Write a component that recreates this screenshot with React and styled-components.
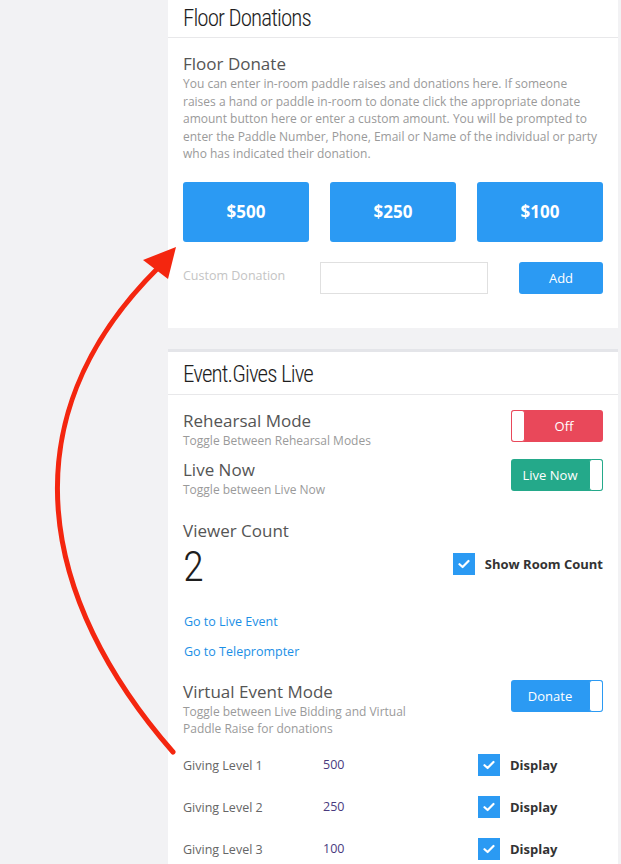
import React from "react";
import styled, { createGlobalStyle } from "styled-components";

const Global = createGlobalStyle`
  html, body { margin: 0; padding: 0; background: #f2f2f4; }
  body { font-family: "Open Sans", "Liberation Sans", sans-serif; }
  * { box-sizing: border-box; }
`;

const BLUE = "#2b9af3";
const CONDENSED = `"Roboto Condensed", "Roboto", "Liberation Sans", sans-serif`;

const Page = styled.div`
  position: relative;
  display: flex;
  min-height: 864px;
  background: #f2f2f4;
`;

const Side = styled.div`
  width: 168px;
  flex: none;
`;

const Main = styled.div`
  width: 450px;
  display: flex;
  flex-direction: column;
  gap: 21px;
`;

const Card = styled.section`
  background: #fff;
  border-top: ${(p) => (p.$topBorder ? "3px solid #e4e5e9" : "none")};
`;

const CardHeader = styled.div`
  height: ${(p) => p.$h || 38}px;
  padding: ${(p) => p.$pt || 0}px 15px 0;
  display: flex;
  align-items: center;
  border-bottom: 1px solid #e8e8ea;
  font-family: ${CONDENSED};
  font-stretch: 75%;
  font-weight: 300;
  font-size: 23px;
  color: #1e1e1e;
  letter-spacing: -0.9px;
`;

const CardBody = styled.div`
  padding: ${(p) => p.$pad || "15px 15px 34px"};
`;

const Title = styled.div`
  font-size: 17px;
  line-height: 22px;
  color: #555;
`;

const Desc = styled.div`
  font-size: 12px;
  line-height: 17.5px;
  color: #9a9a9a;
  max-width: ${(p) => p.$max || "416px"};
`;

const AmountRow = styled.div`
  display: grid;
  grid-template-columns: repeat(3, 126px);
  justify-content: space-between;
  margin-top: 19px;
`;

const AmountButton = styled.button`
  height: 60px;
  border: none;
  border-radius: 3px;
  background: ${BLUE};
  color: #fff;
  font-family: "Open Sans", sans-serif;
  font-weight: 700;
  font-size: 17px;
`;

const CustomRow = styled.div`
  display: flex;
  align-items: center;
  margin-top: 20px;
`;

const CustomLabel = styled.div`
  width: 137px;
  font-size: 12.5px;
  color: #c4c4c4;
  margin-top: -4px;
`;

const Input = styled.div`
  width: 168px;
  height: 32px;
  border: 1px solid #e0e0e0;
`;

const SmallButton = styled.button`
  margin-left: auto;
  width: 84px;
  height: 32px;
  border: none;
  border-radius: 3px;
  background: ${BLUE};
  color: #fff;
  font-family: "Open Sans", sans-serif;
  font-size: 13px;
`;

const SettingRow = styled.div`
  display: flex;
  justify-content: space-between;
  align-items: flex-start;
  margin-top: ${(p) => p.$mt || 0}px;
`;

const Toggle = styled.div`
  width: 92px;
  height: 32px;
  border-radius: 3px;
  background: ${(p) => p.$bg};
  display: flex;
  flex-direction: ${(p) => (p.$knobLeft ? "row" : "row-reverse")};
  align-items: stretch;
  margin-top: ${(p) => p.$mt || 0}px;
  overflow: hidden;
`;

const Knob = styled.div`
  width: 14px;
  background: #fff;
  border: 1px solid ${(p) => p.$bg};
  border-radius: 3px;
`;

const ToggleText = styled.div`
  flex: 1;
  display: flex;
  align-items: center;
  justify-content: center;
  color: #fff;
  font-size: 13px;
`;

const BigNumber = styled.div`
  font-family: ${CONDENSED};
  font-stretch: 75%;
  font-weight: 300;
  font-size: 43px;
  line-height: 48px;
  color: #1e1e1e;
`;

const CheckLine = styled.label`
  display: flex;
  align-items: center;
  gap: 10px;
  font-size: 13px;
  font-weight: 700;
  color: #333;
`;

const Box = styled.span`
  width: 22px;
  height: 22px;
  background: ${BLUE};
  display: flex;
  align-items: center;
  justify-content: center;
`;

const CountCheck = styled.div`
  padding-top: 33px;
`;

const Links = styled.div`
  display: flex;
  flex-direction: column;
  gap: 12px;
  margin-top: 23px;
`;

const LinkText = styled.a`
  font-size: 12.5px;
  line-height: 18px;
  color: #1b8fe6;
  text-decoration: none;
  padding-left: 1px;
`;

const Levels = styled.div`
  margin-top: 6px;
`;

const LevelRow = styled.div`
  display: flex;
  align-items: center;
  height: 42px;
`;

const LevelLabel = styled.div`
  width: 140px;
  font-size: 12.5px;
  color: #666;
  padding-top: 2px;
`;

const LevelValue = styled.div`
  width: 155px;
  font-size: 12.5px;
  color: #4a3a7e;
`;

const Peek = styled.div`
  margin: 1px 0 0 314px;
  width: 106px;
  height: 30px;
  background: #1f95cf;
  border-radius: 16px;
`;

const Overlay = styled.svg`
  position: absolute;
  left: 0;
  top: 0;
  pointer-events: none;
`;

const Check = () => (
  <svg width="12" height="10" viewBox="0 0 12 10">
    <path d="M1.5 5.2 L4.6 8 L10.5 2" fill="none" stroke="#fff" strokeWidth="2.2" strokeLinecap="round" strokeLinejoin="round" />
  </svg>
);

const Checkbox = ({ label }) => (
  <CheckLine>
    <Box>
      <Check />
    </Box>
    {label}
  </CheckLine>
);

const Switch = ({ bg, knobLeft, text, mt }) => (
  <Toggle $bg={bg} $knobLeft={knobLeft} $mt={mt}>
    <Knob $bg={bg} />
    <ToggleText>{text}</ToggleText>
  </Toggle>
);

const levels = [
  ["Giving Level 1", "500"],
  ["Giving Level 2", "250"],
  ["Giving Level 3", "100"],
];

export default function App() {
  return (
    <>
      <Global />
      <Page>
        <Side />
        <Main>
          <Card>
            <CardHeader>Floor Donations</CardHeader>
            <CardBody>
              <Title>Floor Donate</Title>
              <Desc>
                You can enter in-room paddle raises and donations here. If someone raises a hand or paddle in-room
                to donate click the appropriate donate amount button here or enter a custom amount. You will be
                prompted to enter the Paddle Number, Phone, Email or Name of the individual or party who has
                indicated their donation.
              </Desc>
              <AmountRow>
                <AmountButton>$500</AmountButton>
                <AmountButton>$250</AmountButton>
                <AmountButton>$100</AmountButton>
              </AmountRow>
              <CustomRow>
                <CustomLabel>Custom Donation</CustomLabel>
                <Input />
                <SmallButton>Add</SmallButton>
              </CustomRow>
            </CardBody>
          </Card>
          <Card $topBorder>
            <CardHeader $h={43} $pt={3}>Event.Gives Live</CardHeader>
            <CardBody $pad="15px 15px 0">
              <SettingRow>
                <div>
                  <Title>Rehearsal Mode</Title>
                  <Desc>Toggle Between Rehearsal Modes</Desc>
                </div>
                <Switch bg="#e9485a" knobLeft text="Off" />
              </SettingRow>
              <SettingRow $mt={10}>
                <div>
                  <Title>Live Now</Title>
                  <Desc>Toggle between Live Now</Desc>
                </div>
                <Switch bg="#24a98a" text="Live Now" />
              </SettingRow>
              <SettingRow $mt={21}>
                <div>
                  <Title>Viewer Count</Title>
                  <BigNumber>2</BigNumber>
                </div>
                <CountCheck>
                  <Checkbox label="Show Room Count" />
                </CountCheck>
              </SettingRow>
              <Links>
                <LinkText href="#">Go to Live Event</LinkText>
                <LinkText href="#">Go to Teleprompter</LinkText>
              </Links>
              <SettingRow $mt={20}>
                <div>
                  <Title>Virtual Event Mode</Title>
                  <Desc $max="240px">Toggle between Live Bidding and Virtual Paddle Raise for donations</Desc>
                </div>
                <Switch bg={BLUE} text="Donate" mt={-1} />
              </SettingRow>
              <Levels>
                {levels.map(([l, v]) => (
                  <LevelRow key={l}>
                    <LevelLabel>{l}</LevelLabel>
                    <LevelValue>{v}</LevelValue>
                    <Checkbox label="Display" />
                  </LevelRow>
                ))}
              </Levels>
              <Peek />
            </CardBody>
          </Card>
        </Main>
      </Page>
      <Overlay width="621" height="864" viewBox="0 0 621 864">
        <path d="M173 752 C 40 600, 5 420, 158 268" fill="none" stroke="#f4260f" strokeWidth="5" strokeLinecap="round" />
        <polygon points="176,247 143,260 168,279" fill="#f4260f" />
      </Overlay>
    </>
  );
}
